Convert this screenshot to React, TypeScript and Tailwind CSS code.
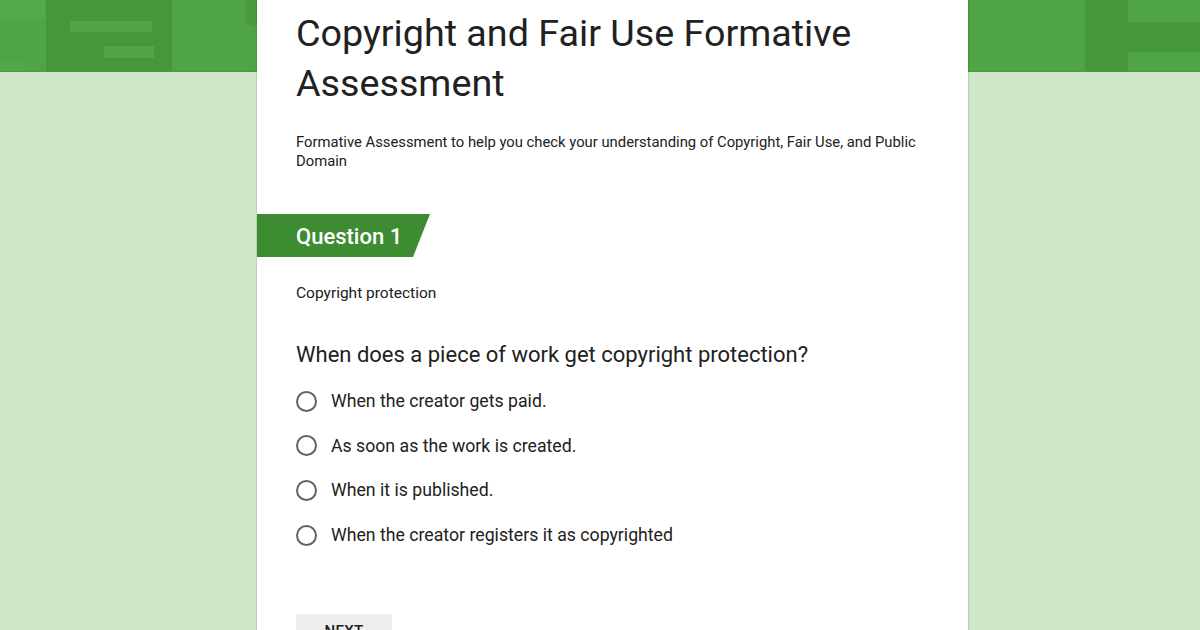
const options = [
  "When the creator gets paid.",
  "As soon as the work is created.",
  "When it is published.",
  "When the creator registers it as copyrighted",
];

const HeaderArt = () => (
  <svg
    className="absolute left-0 top-0"
    width={1200}
    height={72}
    viewBox="0 0 1200 72"
  >
    <rect x={0} y={0} width={1200} height={72} fill="#4fa443" />
    <rect x={0} y={0} width={45} height={20} fill="#53a847" />
    <rect x={0} y={62} width={25} height={10} fill="#53a847" />
    <rect x={46} y={0} width={126} height={72} fill="#46973b" />
    <rect x={70} y={21} width={82} height={11} fill="#52a546" />
    <rect x={104} y={46} width={50} height={12} fill="#52a546" />
    <path d="M245 0 H257 V25 H252 Q245 25 245 18 Z" fill="#4a9b3f" />
    <rect x={1085} y={0} width={43} height={72} fill="#46973b" />
    <rect x={1128} y={22} width={72} height={30} fill="#46973b" />
    <rect x={0} y={71} width={1200} height={1} fill="#479c3c" />
  </svg>
);

export default function App() {
  return (
    <div className="relative h-[630px] w-[1200px] overflow-hidden bg-[#cfe7c9] font-['Roboto',sans-serif] text-[#212121]">
      <HeaderArt />

      <div className="relative ml-[257px] min-h-[700px] w-[711px] bg-white shadow-[0_0_2px_rgba(0,0,0,0.3)]">
        <div className="px-[39px] pt-[8px]">
          <h1 className="text-[37.7px] font-normal leading-[50px]">
            Copyright and Fair Use Formative Assessment
          </h1>
          <p className="mt-[25px] text-[14.8px] leading-[19px]">
            Formative Assessment to help you check your understanding of
            Copyright, Fair Use, and Public Domain
          </p>
        </div>

        {/* Section tag */}
        <div className="mt-[43px] flex h-[43px] w-[173px] items-center bg-[#3d8c32] pb-[1px] pl-[39px] [clip-path:polygon(0_0,100%_0,calc(100%-17px)_100%,0_100%)]">
          <span className="mt-[2px] text-[22px] font-medium text-white">Question 1</span>
        </div>

        <div className="px-[39px]">
          <p className="mt-[26px] text-[15.5px] leading-[20px]">
            Copyright protection
          </p>

          <p className="mt-[38px] text-[22px] leading-[28px]">
            When does a piece of work get copyright protection?
          </p>

          <div className="mt-[10px] flex flex-col">
            {options.map((option) => (
              <label
                key={option}
                className="flex h-[44.67px] items-center gap-[14px]"
              >
                <span className="h-[21px] w-[21px] rounded-full border-2 border-[#5f6368]" />
                <span className="text-[17.7px]">{option}</span>
              </label>
            ))}
          </div>

          <div className="mt-[56px] flex items-start">
            <button className="h-[36px] w-[96px] rounded-[3px] bg-[#eeeeee] text-[15px] font-medium tracking-wide text-[#212121]">
              NEXT
            </button>
            <div className="ml-auto flex items-start gap-[18px] pr-[4px] pt-[15px]">
              <div className="mt-[1px] h-[10px] w-[200px] rounded-[2px] border border-[#e0e0e0]">
                <div className="h-full w-[20px] bg-[#3d8c32]" />
              </div>
              <span className="text-[15px] leading-[16px] text-[#5f6368]">
                Page 1 of 10
              </span>
            </div>
          </div>
        </div>
      </div>
    </div>
  );
}
